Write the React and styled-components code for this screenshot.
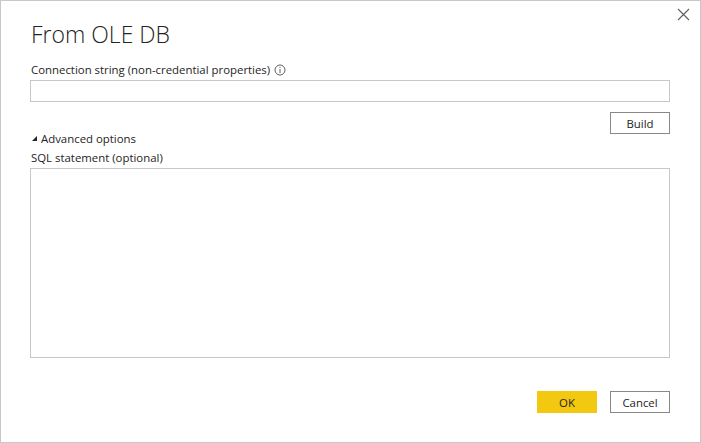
import React from 'react'
import styled, { createGlobalStyle } from 'styled-components'

const Global = createGlobalStyle`
  html, body { margin: 0; padding: 0; background: #fff; }
  body { font-family: "Open Sans", "Noto Sans", sans-serif; color: #252423; }
`

const Dialog = styled.div`
  position: relative;
  box-sizing: border-box;
  width: 701px;
  height: 443px;
  border: 1px solid #c8c8c8;
  background: #fff;
  display: flex;
  flex-direction: column;
  padding: 0 30px 29px 29px;
`

const Close = styled.button`
  position: absolute;
  top: 7px;
  right: 10px;
  width: 13px;
  height: 13px;
  padding: 0;
  border: none;
  background: transparent;
  display: flex;
  cursor: pointer;
`

const Title = styled.h1`
  margin: 17px 0 0 1px;
  font-size: 23px;
  font-weight: 300;
  line-height: 32px;
  color: #252423;
`

const Label = styled.div`
  display: flex;
  align-items: center;
  gap: 4px;
  font-size: 11.4px;
  line-height: 16px;
  margin-top: ${p => p.$top || 0}px;
  margin-left: 1px;
  color: #252423;
`

const TextInput = styled.input`
  box-sizing: border-box;
  width: 100%;
  height: 22px;
  margin-top: 2px;
  border: 1px solid #c8c8c8;
  outline: none;
  font: inherit;
`

const TextArea = styled.textarea`
  box-sizing: border-box;
  width: 100%;
  height: 190px;
  margin-top: 2px;
  border: 1px solid #c8c8c8;
  outline: none;
  resize: none;
  font: inherit;
`

const Row = styled.div`
  display: flex;
  justify-content: flex-end;
  gap: 13px;
  margin-top: ${p => p.$top || 0}px;
`

const Button = styled.button`
  box-sizing: border-box;
  width: 60px;
  height: 22px;
  padding: 0;
  font-family: inherit;
  font-size: 11.4px;
  color: #252423;
  background: ${p => (p.$primary ? '#f2c811' : '#fff')};
  border: 1px solid ${p => (p.$primary ? '#f2c811' : '#8a8886')};
  cursor: pointer;
`

const Toggle = styled.div`
  display: flex;
  align-items: center;
  gap: 3px;
  margin-top: -3px;
  margin-left: 2px;
  font-size: 11.4px;
  line-height: 16px;
`

const Footer = styled(Row)`
  margin-top: auto;
`

function App() {
  return (
    <>
      <Global />
      <Dialog>
        <Close aria-label="Close">
          <svg width="13" height="13" viewBox="0 0 13 13">
            <path d="M1 1 L12 12 M12 1 L1 12" stroke="#605e5c" strokeWidth="1.1" fill="none" />
          </svg>
        </Close>
        <Title>From OLE DB</Title>
        <Label $top={12}>
          Connection string (non-credential properties)
          <svg width="12" height="12" viewBox="0 0 12 12">
            <circle cx="6" cy="6" r="5" stroke="#605e5c" strokeWidth="1" fill="none" />
            <path d="M6 5 V9" stroke="#605e5c" strokeWidth="1" />
            <circle cx="6" cy="3.3" r="0.6" fill="#605e5c" />
          </svg>
        </Label>
        <TextInput />
        <Row $top={10}>
          <Button>Build</Button>
        </Row>
        <Toggle>
          <svg width="6" height="6" viewBox="0 0 6 6">
            <polygon points="5,0 5,5 0,5" fill="#252423" />
          </svg>
          Advanced options
        </Toggle>
        <Label $top={3}>SQL statement (optional)</Label>
        <TextArea />
        <Footer>
          <Button $primary>OK</Button>
          <Button>Cancel</Button>
        </Footer>
      </Dialog>
    </>
  )
}

export default App
